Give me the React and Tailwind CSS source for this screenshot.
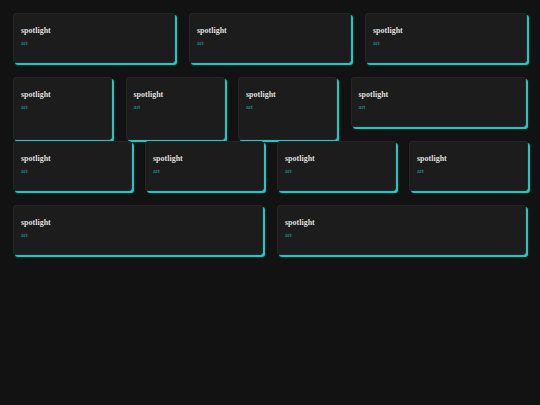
import React from 'react';

const Card = ({ className = '' }) => (
  <div
    className={`relative shrink-0 rounded-[3px] border border-[#262626] bg-[#1c1c1c] pl-[7px] pt-[12px] shadow-[2px_2px_0_#27c4c4,2px_2px_3px_rgba(39,196,196,0.25)] ${className}`}
    style={{ fontFamily: '"Liberation Serif", "Times New Roman", serif' }}
  >
    <div className="text-[8px] font-bold leading-[9px] text-[#dedede]">spotlight</div>
    <div className="mt-[4px] text-[6.5px] leading-[7px] text-[#1fabab]">art</div>
  </div>
);

const App = () => {
  return (
    <div className="min-h-[405px] w-full bg-[#121212] pl-[13px] pr-[14px] pt-[13px]">
      <div className="flex flex-col gap-[14px]">
        <div className="flex h-[50px] gap-[14px]">
          <Card className="h-[50px] w-[162px]" />
          <Card className="h-[50px] w-[162px]" />
          <Card className="h-[50px] w-[162px]" />
        </div>
        <div className="flex h-[50px] gap-[13.5px]">
          <Card className="h-[63px] w-[99px]" />
          <Card className="h-[63px] w-[99px]" />
          <Card className="h-[63px] w-[99px]" />
          <Card className="h-[50px] w-[175px]" />
        </div>
        <div className="relative z-10 flex h-[50px] gap-[13px]">
          <Card className="h-[50px] w-[119px]" />
          <Card className="h-[50px] w-[119px]" />
          <Card className="h-[50px] w-[119px]" />
          <Card className="h-[50px] w-[119px]" />
        </div>
        <div className="flex h-[50px] gap-[14px]">
          <Card className="h-[50px] w-[250px]" />
          <Card className="h-[50px] w-[249px]" />
        </div>
      </div>
    </div>
  );
};

export default App;
